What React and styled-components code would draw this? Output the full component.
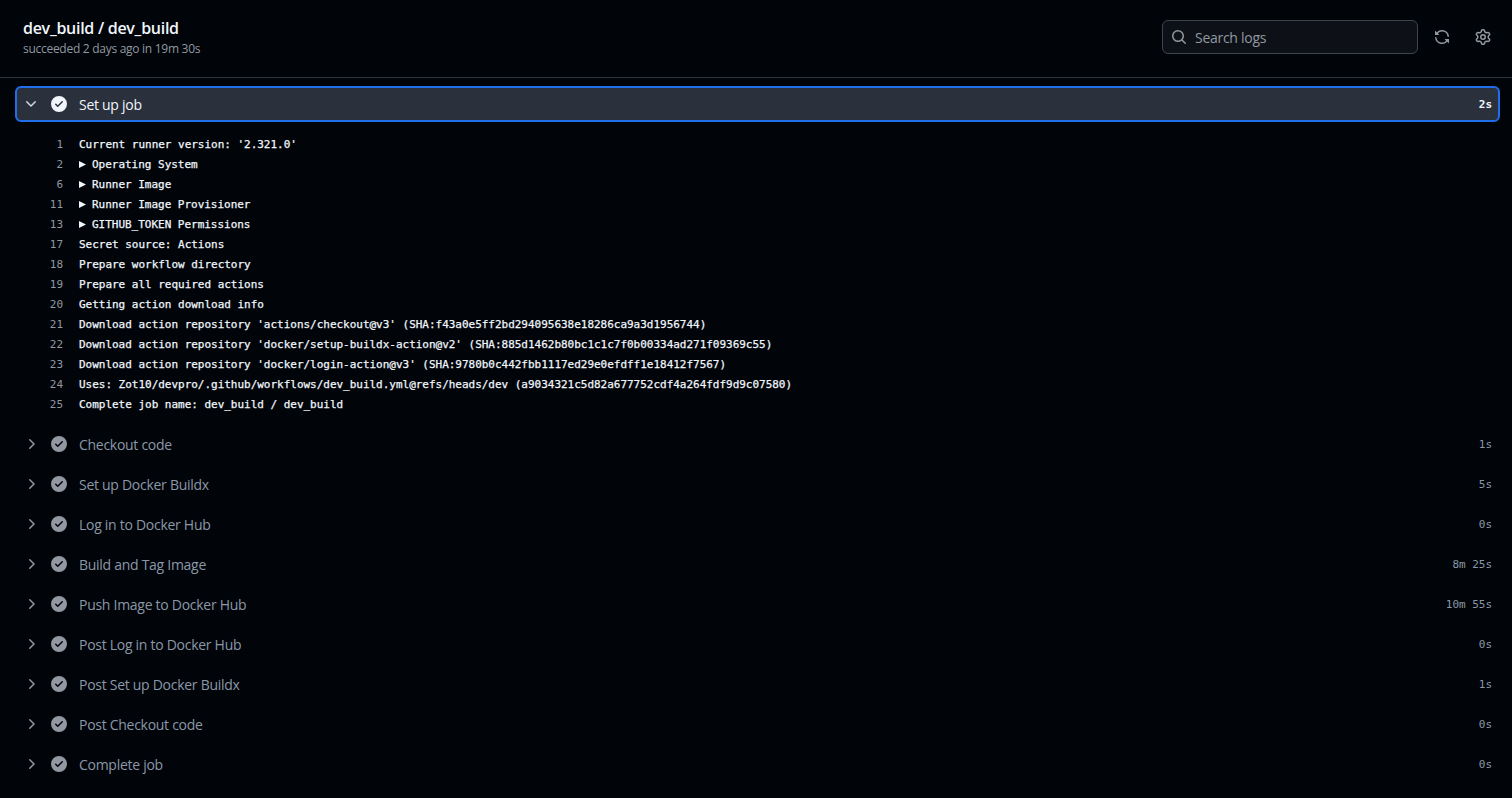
import React from "react";
import styled, { createGlobalStyle } from "styled-components";

const Global = createGlobalStyle`
  html, body { margin: 0; padding: 0; background: #010409; }
  body { font-family: "Open Sans", "Noto Sans", sans-serif; color: #f0f6fc; letter-spacing: -0.28px; }
`;
const Page = styled.div`
  width: 1512px; height: 798px; overflow: hidden; background: #010409;
`;
const Header = styled.header`
  height: 77px; border-bottom: 1px solid #30363d;
  display: flex; align-items: flex-start; justify-content: space-between;
  padding: 0 21px 0 23px;
`;
const TitleBlock = styled.div`padding-top: 18px;`;
const Title = styled.h1`
  margin: 0; font-size: 16px; line-height: 20px; font-weight: 600; color: #f0f6fc;
`;
const Sub = styled.div`
  font-size: 12px; line-height: 18px; color: #9198a1; margin-top: 2px;
`;
const Tools = styled.div`
  display: flex; align-items: center; padding-top: 20px; gap: 16px;
`;
const Search = styled.div`
  width: 256px; height: 34px; box-sizing: border-box; display: flex; align-items: center;
  gap: 8px; padding: 0 8px; background: #0d1117; border: 1px solid #3d444d; border-radius: 6px;
  font-size: 14px; color: #9198a1;
`;
const ToolIcon = styled.span`
  width: 16px; height: 16px; display: flex; color: #9198a1;
  margin-left: ${p => p.$gap || 0}px;
`;
const Svg = styled.svg`
  width: 16px; height: 16px; fill: currentColor; display: block; flex: none;
`;
const Steps = styled.div`
  padding: 8px 12px 0 15px;
`;
const Row = styled.div`
  height: ${p => (p.$open ? "36px" : "40px")}; box-sizing: border-box; display: flex; align-items: center;
  padding: 0 6px; font-size: 14px;
  background: ${p => (p.$open ? "#2a313c" : "transparent")};
  border: 2px solid ${p => (p.$open ? "#1f6feb" : "transparent")};
  border-radius: 6px;
`;
const Chevron = styled.span`
  width: 16px; height: 16px; display: flex; margin-right: 12px;
  color: ${p => (p.$open ? "#d1d7e0" : "#9198a1")};
`;
const Check = styled.span`
  width: 16px; height: 16px; display: flex; margin-right: 12px;
  color: ${p => (p.$open ? "#f0f6fc" : "#9198a1")};
`;
const Name = styled.span`flex: 1; color: ${p => (p.$open ? "#f0f6fc" : "#8b98a8")};`;
const Dur = styled.span`
  font-family: "DejaVu Sans Mono", "Liberation Mono", monospace; font-size: 11px; letter-spacing: -0.02px;
  font-weight: ${p => (p.$open ? 700 : 400)};
  color: ${p => (p.$open ? "#f0f6fc" : "#8b98a8")};
`;
const Log = styled.div`
  padding: 12px 0 10px 0;
`;
const Line = styled.div`
  display: flex; height: 20px; align-items: center;
  font-family: "DejaVu Sans Mono", "Liberation Mono", monospace; font-size: 11px; letter-spacing: -0.02px;
  white-space: pre;
`;
const Num = styled.span`
  width: 48px; text-align: right; color: #9198a1; margin-right: 16px; font-weight: 400;
`;
const Text = styled.span`color: #f0f6fc; font-weight: 400; -webkit-text-stroke: 0.25px #f0f6fc;`;
const Tri = styled.svg`
  width: 7px; height: 7px; margin-right: 6px; fill: #f0f6fc;
`;

const P = {
  gear: "M8 0a8.2 8.2 0 0 1 .701.031C9.444.095 9.99.645 10.16 1.29l.288 1.107c.018.066.079.158.212.224.231.114.454.243.668.386.123.082.233.09.299.071l1.103-.303c.644-.176 1.392.021 1.82.63.27.385.506.792.704 1.218.315.675.111 1.422-.364 1.891l-.814.806c-.049.048-.098.147-.088.294.016.257.016.515 0 .772-.01.147.038.246.088.294l.814.806c.475.469.679 1.216.364 1.891a7.977 7.977 0 0 1-.704 1.217c-.428.61-1.176.807-1.82.63l-1.102-.302c-.067-.019-.177-.011-.3.071a5.909 5.909 0 0 1-.668.386c-.133.066-.194.158-.211.224l-.29 1.106c-.168.646-.715 1.196-1.458 1.26a8.006 8.006 0 0 1-1.402 0c-.743-.064-1.289-.614-1.458-1.26l-.289-1.106c-.018-.066-.079-.158-.212-.224a5.738 5.738 0 0 1-.668-.386c-.123-.082-.233-.09-.299-.071l-1.103.303c-.644.176-1.392-.021-1.82-.63a8.12 8.12 0 0 1-.704-1.218c-.315-.675-.111-1.422.363-1.891l.815-.806c.05-.048.098-.147.088-.294a6.214 6.214 0 0 1 0-.772c.01-.147-.038-.246-.088-.294l-.815-.806C.635 6.045.431 5.298.746 4.623a7.92 7.92 0 0 1 .704-1.217c.428-.61 1.176-.807 1.82-.63l1.102.302c.067.019.177.011.3-.071.214-.143.437-.272.668-.386.133-.066.194-.158.211-.224l.29-1.106C6.009.645 6.556.095 7.299.03 7.53.01 7.764 0 8 0Zm-.571 1.525c-.036.003-.108.036-.137.146l-.289 1.105c-.147.561-.549.967-.998 1.189-.173.086-.34.183-.5.29-.417.278-.97.423-1.529.27l-1.103-.303c-.109-.03-.175.016-.195.045-.22.312-.412.644-.573.99-.014.031-.021.11.059.19l.815.806c.411.406.562.957.53 1.456a4.709 4.709 0 0 0 0 .582c.032.499-.119 1.05-.53 1.456l-.815.806c-.081.08-.073.159-.059.19.162.346.353.677.573.989.02.03.085.076.195.046l1.102-.303c.56-.153 1.113-.008 1.53.27.161.107.328.204.501.29.447.222.85.629.997 1.189l.289 1.105c.029.109.101.143.137.146a6.6 6.6 0 0 0 1.142 0c.036-.003.108-.036.137-.146l.289-1.105c.147-.561.549-.967.998-1.189.173-.086.34-.183.5-.29.417-.278.97-.423 1.529-.27l1.103.303c.109.029.175-.016.195-.045.22-.313.411-.644.573-.99.014-.031.021-.11-.059-.19l-.815-.806c-.411-.406-.562-.957-.53-1.456a4.709 4.709 0 0 0 0-.582c-.032-.499.119-1.05.53-1.456l.815-.806c.081-.08.073-.159.059-.19a6.464 6.464 0 0 0-.573-.989c-.02-.03-.085-.076-.195-.046l-1.102.303c-.56.153-1.113.008-1.53-.27a4.44 4.44 0 0 0-.501-.29c-.447-.222-.85-.629-.997-1.189l-.289-1.105c-.029-.11-.101-.143-.137-.146a6.6 6.6 0 0 0-1.142 0ZM11 8a3 3 0 1 1-6 0 3 3 0 0 1 6 0ZM9.5 8a1.5 1.5 0 1 0-3.001.001A1.5 1.5 0 0 0 9.5 8Z",
  sync: "M1.705 8.005a.75.75 0 0 1 .834.656 5.5 5.5 0 0 0 9.592 2.97l-1.204-1.204a.25.25 0 0 1 .177-.427h3.646a.25.25 0 0 1 .25.25v3.646a.25.25 0 0 1-.427.177l-1.38-1.38A7.002 7.002 0 0 1 1.05 8.84a.75.75 0 0 1 .656-.834ZM8 2.5a5.487 5.487 0 0 0-4.131 1.869l1.204 1.204A.25.25 0 0 1 4.896 6H1.25A.25.25 0 0 1 1 5.75V2.104a.25.25 0 0 1 .427-.177l1.38 1.38A7.002 7.002 0 0 1 14.95 7.16a.75.75 0 0 1-1.49.178A5.5 5.5 0 0 0 8 2.5Z",
  check: "M8 16A8 8 0 1 1 8 0a8 8 0 0 1 0 16Zm3.78-9.72a.751.751 0 0 0-.018-1.042.751.751 0 0 0-1.042-.018L6.75 9.19 5.28 7.72a.751.751 0 0 0-1.042.018.751.751 0 0 0-.018 1.042l2 2a.75.75 0 0 0 1.06 0Z",
  right: "M6.22 3.22a.75.75 0 0 1 1.06 0l4.25 4.25a.75.75 0 0 1 0 1.06l-4.25 4.25a.751.751 0 0 1-1.042-.018.751.751 0 0 1-.018-1.042L9.94 8 6.22 4.28a.75.75 0 0 1 0-1.06Z",
  down: "M12.78 5.22a.749.749 0 0 1 0 1.06l-4.25 4.25a.749.749 0 0 1-1.06 0L3.22 6.28a.749.749 0 1 1 1.06-1.06L8 8.939l3.72-3.719a.749.749 0 0 1 1.06 0Z",
  search: "M10.68 11.74a6 6 0 0 1-7.922-8.982 6 6 0 0 1 8.982 7.922l3.04 3.04a.749.749 0 0 1-.326 1.275.749.749 0 0 1-.734-.215ZM11.5 7a4.499 4.499 0 1 0-8.997 0A4.499 4.499 0 0 0 11.5 7Z",
};
const Icon = ({ d }) => <Svg viewBox="0 0 16 16"><path fillRule="evenodd" d={d} /></Svg>;

const lines = [
  [1, "Current runner version: '2.321.0'"],
  [2, "Operating System", 1],
  [6, "Runner Image", 1],
  [11, "Runner Image Provisioner", 1],
  [13, "GITHUB_TOKEN Permissions", 1],
  [17, "Secret source: Actions"],
  [18, "Prepare workflow directory"],
  [19, "Prepare all required actions"],
  [20, "Getting action download info"],
  [21, "Download action repository 'actions/checkout@v3' (SHA:f43a0e5ff2bd294095638e18286ca9a3d1956744)"],
  [22, "Download action repository 'docker/setup-buildx-action@v2' (SHA:885d1462b80bc1c1c7f0b00334ad271f09369c55)"],
  [23, "Download action repository 'docker/login-action@v3' (SHA:9780b0c442fbb1117ed29e0efdff1e18412f7567)"],
  [24, "Uses: Zot10/devpro/.github/workflows/dev_build.yml@refs/heads/dev (a9034321c5d82a677752cdf4a264fdf9d9c07580)"],
  [25, "Complete job name: dev_build / dev_build"],
];
const steps = [
  ["Checkout code", "1s"], ["Set up Docker Buildx", "5s"], ["Log in to Docker Hub", "0s"],
  ["Build and Tag Image", "8m 25s"], ["Push Image to Docker Hub", "10m 55s"], ["Post Log in to Docker Hub", "0s"],
  ["Post Set up Docker Buildx", "1s"], ["Post Checkout code", "0s"], ["Complete job", "0s"],
];

function Step({ name, time, open }) {
  return (
    <Row $open={open}>
      <Chevron $open={open}><Icon d={open ? P.down : P.right} /></Chevron>
      <Check $open={open}><Icon d={P.check} /></Check>
      <Name $open={open}>{name}</Name>
      <Dur $open={open}>{time}</Dur>
    </Row>
  );
}

export default function App() {
  return (
    <Page>
      <Global />
      <Header>
        <TitleBlock>
          <Title>dev_build / dev_build</Title>
          <Sub>succeeded 2 days ago in 19m 30s</Sub>
        </TitleBlock>
        <Tools>
          <Search><Icon d={P.search} />Search logs</Search>
          <ToolIcon><Icon d={P.sync} /></ToolIcon>
          <ToolIcon $gap={9}><Icon d={P.gear} /></ToolIcon>
        </Tools>
      </Header>
      <Steps>
        <Step name="Set up job" time="2s" open />
        <Log>
          {lines.map(([n, t, g]) => (
            <Line key={n}>
              <Num>{n}</Num>
              {g && <Tri viewBox="0 0 7 7"><path d="M0 0l7 3.5L0 7z" /></Tri>}
              <Text>{t}</Text>
            </Line>
          ))}
        </Log>
        {steps.map(([n, t]) => <Step key={n} name={n} time={t} />)}
      </Steps>
    </Page>
  );
}
